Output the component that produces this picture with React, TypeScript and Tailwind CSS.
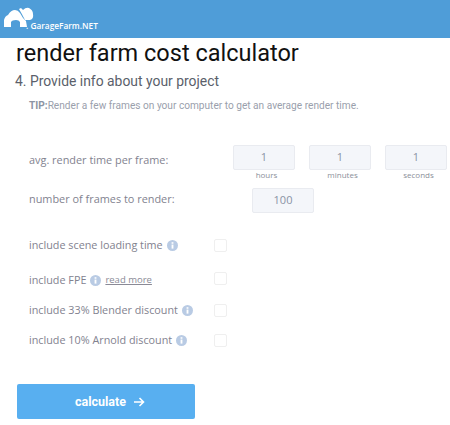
import React from "react";

function Info({ className = "" }: { className?: string }) {
  return (
    <svg width="11" height="11" viewBox="0 0 12 12" className={`shrink-0 ${className}`}>
      <circle cx="6" cy="6" r="6" fill="#b9cbe4" />
      <rect x="5" y="5" width="2" height="4.4" fill="#fff" />
      <rect x="5" y="2.4" width="2" height="1.7" fill="#fff" />
    </svg>
  );
}

function Box({ value, label, w = "w-[62px]" }: { value: string; label?: string; w?: string }) {
  return (
    <div className={`flex flex-col items-center ${w}`}>
      <div className="w-full h-[25px] bg-[#f4f6fa] border border-[#e9ebf0] rounded-[2px] flex items-center justify-center text-[11px] text-[#8a93a5] font-['Open_Sans',sans-serif]">
        {value}
      </div>
      {label && <div className="text-[8px] leading-[10px] pl-[5px] text-[#8b8f99] font-['Open_Sans',sans-serif]">{label}</div>}
    </div>
  );
}

function CheckRow({ children, h }: { children: React.ReactNode; h: string }) {
  return (
    <div className={`flex items-center pl-[29px] ${h}`}>
      <div className="w-[185px] flex items-center gap-[4px] text-[10.8px] text-[#82828f] font-['Open_Sans',sans-serif]">{children}</div>
      <div className="w-[13px] h-[13px] border border-[#efefef] rounded-[2px]" />
    </div>
  );
}

export default function App() {
  return (
    <div className="w-[450px] h-[425px] bg-white overflow-hidden font-['Roboto',sans-serif]">
      <div className="h-[38px] bg-[#4f9dd8] flex items-center pl-[4px]">
        <svg width="30" height="21" viewBox="0 0 30 21" className="mt-[-3px] shrink-0">
          <path d="M0 20 L0 13 Q1 9 4 8 Q7 3 11 3 Q14 3 16 6 L19 11 L22 14 L23 20 L16 20 L16 15 Q15 13 12 13 Q8 13 7 15 L7 20 Z" fill="#fff" />
          <path d="M15 2 L17 1 L19 3 Q22 0 25 1 Q29 3 29 7 Q30 12 26 13 L21 13 Q18 7 15 2 Z" fill="#fff" />
        </svg>
        <span className="text-[8.3px] leading-[12px] text-white font-semibold ml-[-8px] mt-[14px] whitespace-nowrap font-['Open_Sans',sans-serif]">
          . GarageFarm.NET
        </span>
      </div>
      <h1 className="pl-[16px] mt-[1px] text-[23.5px] leading-[29px] text-[#111] font-normal">render farm cost calculator</h1>
      <h2 className="pl-[15px] mt-[3px] text-[13.9px] leading-[20px] text-[#5b5f6b] font-normal">4. Provide info about your project</h2>
      <p className="pl-[29px] mt-[8px] text-[10.15px] leading-[14px] text-[#9aa0ac]">
        <b className="font-bold text-[#8d94a3]">TIP:</b>Render a few frames on your computer to get an average render time.
      </p>
      <div className="flex items-start pl-[29px] mt-[32px] h-[43px]">
        <div className="w-[204px] text-[10.9px] leading-[25px] pt-[2px] text-[#82828f] font-['Open_Sans',sans-serif]">avg. render time per frame:</div>
        <div className="flex gap-[14px]">
          <Box value="1" label="hours" />
          <Box value="1" label="minutes" />
          <Box value="1" label="seconds" />
        </div>
      </div>
      <div className="flex items-center pl-[29px] h-[25px]">
        <div className="w-[223px] text-[10.9px] leading-[25px] mt-[-5px] text-[#82828f] font-['Open_Sans',sans-serif]">number of frames to render:</div>
        <Box value="100" />
      </div>
      <div className="mt-[26px]">
        <CheckRow h="h-[13px]">include scene loading time <Info /></CheckRow>
        <CheckRow h="h-[13px] mt-[20px]">
          <span className="mt-[3px]">include FPE</span> <Info className="mt-[3px]" />
          <span className="text-[9.5px] underline mt-[3px] text-[#8a8a96]">read more</span>
        </CheckRow>
        <CheckRow h="h-[13px] mt-[19px]">include 33% Blender discount <Info /></CheckRow>
        <CheckRow h="h-[13px] mt-[17px]">include 10% Arnold discount <Info /></CheckRow>
      </div>
      <div className="pl-[17px] mt-[37px]">
        <button className="w-[178px] h-[35px] bg-[#58aff0] rounded-[2px] flex items-center justify-center gap-[7px] pl-[8px] pt-[1px] text-white text-[12.5px] font-bold">
          calculate
          <svg width="12" height="12" viewBox="0 0 12 12" fill="none" stroke="#fff" strokeWidth="1.6">
            <path d="M1 6 H10.5 M6.5 2 L10.5 6 L6.5 10" />
          </svg>
        </button>
      </div>
    </div>
  );
}
